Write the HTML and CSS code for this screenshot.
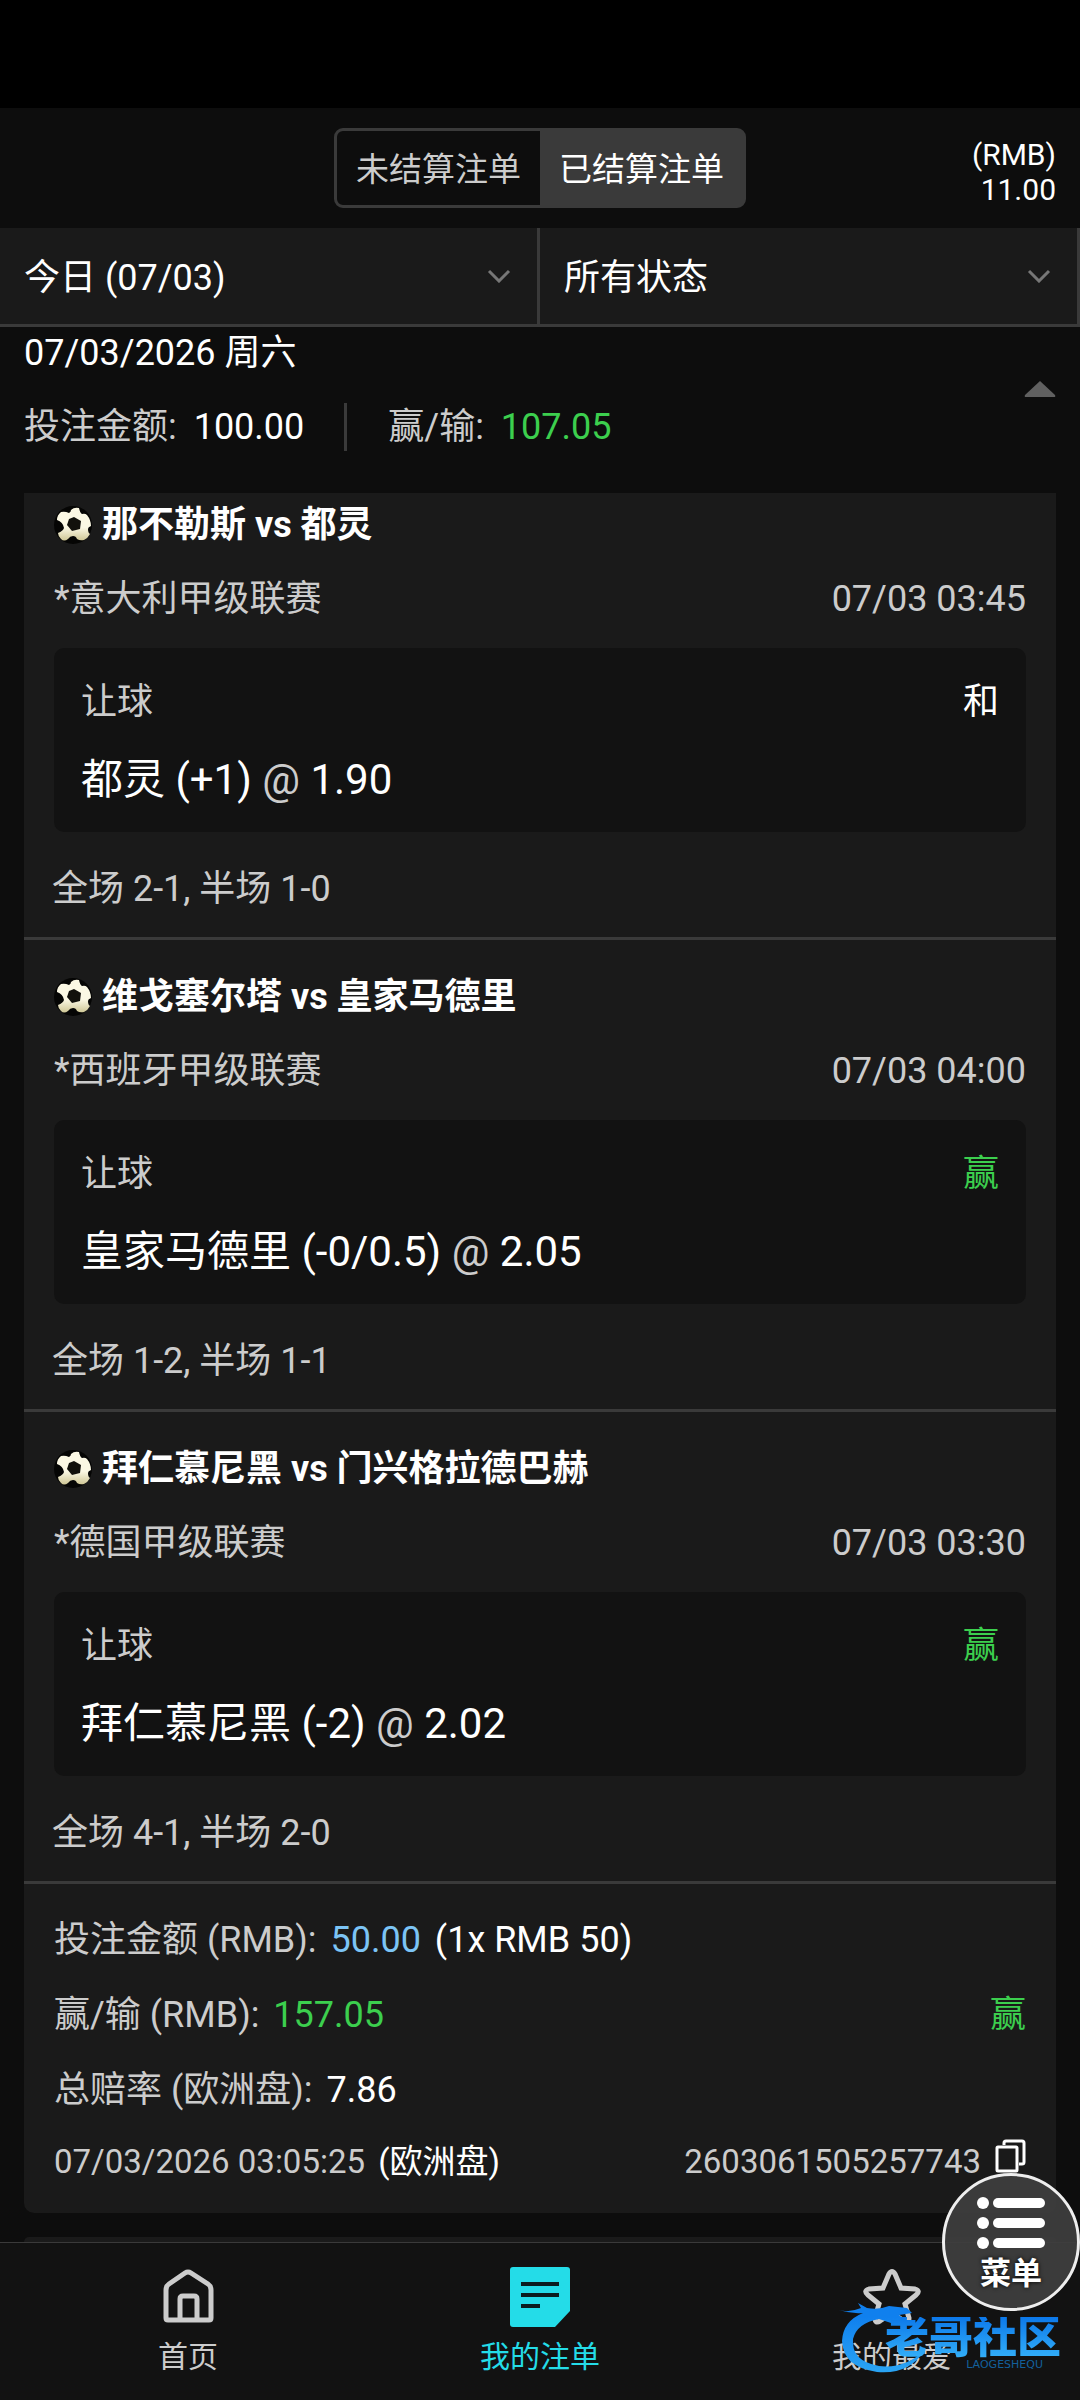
FILE: index.html
```html
<!DOCTYPE html>
<html lang="zh-CN">

<head>
    <meta charset="UTF-8">
    <meta name="viewport" content="width=device-width, initial-scale=1.0">
    <title>我的注单</title>
    <link rel="stylesheet" href="styles.css">
</head>

<body>
    <!-- Shared ball icon -->
    <svg class="defs" aria-hidden="true">
        <defs>
            <linearGradient id="ball-fill" x1="0" y1="0" x2="0" y2="1">
                <stop offset="0.6" stop-color="#fbf8e4" />
                <stop offset="1" stop-color="#cfc796" />
            </linearGradient>
            <symbol id="ball" viewBox="0 0 38 38">
                <circle cx="19" cy="19" r="19" fill="#050504" />
                <path d="M15 7 Q17 6 17 4 Q20 1 25 2 Q26 7 28 8 Q31 7 33 9 Q37 14 37 20 Q34 21 34 23 Q34 27 36 28 Q34 32 30 34 Q26 35 23 33 Q22 30 19 30 Q16 30 14 33 Q10 36 7 33 Q4 30 4 27 Q9 25 10 22 Q9 16 3 14 Q3 9 7 6 Q11 5 15 7 Z" fill="url(#ball-fill)" />
                <path d="M20 11 L27 15 L26 23 L18 25 L13 19 L15 13 Z" fill="#12110c" />
            </symbol>
        </defs>
    </svg>

    <div class="status-bar"></div>

    <header class="header">
        <div class="tabs">
            <button type="button" class="tab">未结算注单</button>
            <button type="button" class="tab active">已结算注单</button>
        </div>
        <div class="balance">
            <span>(RMB)</span>
            <span>11.00</span>
        </div>
    </header>

    <div class="filters">
        <div class="filter">
            <select aria-label="日期">
                <option>今日 (07/03)</option>
            </select>
            <svg class="chevron" viewBox="0 0 24 14"><path d="M2 2 L12 12 L22 2" /></svg>
        </div>
        <div class="filter">
            <select aria-label="状态">
                <option>所有状态</option>
            </select>
            <svg class="chevron" viewBox="0 0 24 14"><path d="M2 2 L12 12 L22 2" /></svg>
        </div>
    </div>

    <section class="day">
        <div>
            <div class="day-date">07/03/2026 周六</div>
            <div class="day-totals">
                <span class="total">投注金额: <b>100.00</b></span>
                <span class="total">赢/输: <b class="win">107.05</b></span>
            </div>
        </div>
        <button type="button" class="collapse" aria-label="收起">
            <svg viewBox="0 0 32 18"><path d="M16 1 L31 15 Q32 17 30 17 H2 Q0 17 1 15 Z" /></svg>
        </button>
    </section>

    <main class="bets">
        <article class="card cut">
            <div class="match">
                <h2 class="teams"><svg><use href="#ball" /></svg>那不勒斯 vs 都灵</h2>
                <div class="row league"><span>*意大利甲级联赛</span><time>07/03 03:45</time></div>
                <div class="pick">
                    <div class="row"><span>让球</span><span class="draw">和</span></div>
                    <div class="odds">都灵 (+1) <i>@</i> 1.90</div>
                </div>
                <div class="score">全场 2-1, 半场 1-0</div>
            </div>
            <div class="match">
                <h2 class="teams"><svg><use href="#ball" /></svg>维戈塞尔塔 vs 皇家马德里</h2>
                <div class="row league"><span>*西班牙甲级联赛</span><time>07/03 04:00</time></div>
                <div class="pick">
                    <div class="row"><span>让球</span><span class="win">赢</span></div>
                    <div class="odds">皇家马德里 (-0/0.5) <i>@</i> 2.05</div>
                </div>
                <div class="score">全场 1-2, 半场 1-1</div>
            </div>
            <div class="match">
                <h2 class="teams"><svg><use href="#ball" /></svg>拜仁慕尼黑 vs 门兴格拉德巴赫</h2>
                <div class="row league"><span>*德国甲级联赛</span><time>07/03 03:30</time></div>
                <div class="pick">
                    <div class="row"><span>让球</span><span class="win">赢</span></div>
                    <div class="odds">拜仁慕尼黑 (-2) <i>@</i> 2.02</div>
                </div>
                <div class="score">全场 4-1, 半场 2-0</div>
            </div>
            <div class="summary">
                <div class="row"><span>投注金额 (RMB): <b class="stake">50.00</b> <b>(1x RMB 50)</b></span></div>
                <div class="row"><span>赢/输 (RMB): <b class="win">157.05</b></span><span class="win">赢</span></div>
                <div class="row"><span>总赔率 (欧洲盘): <b>7.86</b></span></div>
                <div class="row small">
                    <span>07/03/2026 03:05:25 <b>(欧洲盘)</b></span>
                    <span class="ticket">2603061505257743
                        <button type="button" class="copy" aria-label="复制">
                            <svg viewBox="0 0 31 34"><path d="M9 6 V4 Q9 2 11 2 H27 Q29 2 29 4 V23 Q29 25 27 25 H24" /><rect x="2" y="8" width="20" height="24" rx="1" /></svg>
                        </button>
                    </span>
                </div>
            </div>
        </article>
        <article class="card next"></article>
    </main>

    <nav class="nav">
        <a href="#">
            <svg viewBox="0 0 60 60"><path d="M10 53 Q8 53 8 51 V23 Q8 19 11 17 L27 6 Q30 4 33 6 L50 17 Q53 19 53 23 V51 Q53 53 51 53 Z M22 53 V32 Q22 29 25 29 H36 Q39 29 39 32 V53" /></svg>
            <span>首页</span>
        </a>
        <a href="#" class="current">
            <svg viewBox="0 0 60 60"><path class="solid" d="M3 0 H57 Q60 0 60 3 V44 L45 60 H3 Q0 60 0 57 V3 Q0 0 3 0 Z" /><path class="lines" d="M11 17 H49 M11 28 H49 M11 39 H30" /></svg>
            <span>我的注单</span>
        </a>
        <a href="#">
            <svg viewBox="0 0 60 60"><path d="M27 7 Q30 2 33 7 L39 21 L53 22 Q59 24 54 28 L43 37 L47 51 Q47 57 42 54 L30 46 L18 54 Q13 57 13 51 L17 37 L6 28 Q1 24 7 22 L21 21 Z" /></svg>
            <span>我的最爱</span>
        </a>

        <button type="button" class="menu">
            <svg viewBox="0 0 70 54">
                <circle cx="7" cy="7" r="6" /><rect x="17" y="2" width="52" height="10" rx="5" />
                <circle cx="7" cy="27" r="6" /><rect x="17" y="22" width="52" height="10" rx="5" />
                <circle cx="7" cy="47" r="6" /><rect x="17" y="42" width="52" height="10" rx="5" />
            </svg>
            菜单
        </button>

        <div class="watermark">
            <svg viewBox="0 0 100 76">
                <defs>
                    <linearGradient id="swoosh" x1="0" y1="0" x2="0" y2="1">
                        <stop offset="0.2" stop-color="#1080ee" />
                        <stop offset="1" stop-color="#2aa4f4" />
                    </linearGradient>
                </defs>
                <path fill="url(#swoosh)" d="M0 9 Q10 12 22 7 L19 2 L28 7 Q40 9 50 5 L68 7 L73 12 L60 14 L66 19 L58 19 L52 22 L40 18 Q18 22 14 38 Q12 60 40 65 Q66 68 86 49 Q70 74 38 71 Q4 66 3 40 Q4 20 24 12 Q12 13 0 9 Z" />
            </svg>
            <div class="brand"><span>老哥社区</span><small>LAOGESHEQU</small></div>
        </div>
    </nav>
</body>

</html>
```
FILE: styles.css
```css
* {
    box-sizing: border-box;
}

body {
    margin: 0;
    min-height: 100vh;
    display: flex;
    flex-direction: column;
    background-color: #0d0d0d;
    color: #fff;
    font-family: Roboto, "Noto Sans CJK SC", sans-serif;
    font-size: 36px;
    line-height: 52px;
}

button,
select {
    font: inherit;
    color: inherit;
    background: none;
    border: none;
    padding: 0;
    margin: 0;
    cursor: pointer;
}

b,
i {
    font-weight: 400;
    font-style: normal;
}

b {
    color: #fff;
}

.defs {
    position: absolute;
    width: 0;
    height: 0;
}

.status-bar {
    height: 108px;
    background-color: #000;
}

/* Header */
.header {
    height: 120px;
    padding: 0 24px;
    display: grid;
    grid-template-columns: 1fr auto 1fr;
    align-items: center;
}

.tabs {
    grid-column: 2;
    display: flex;
    height: 80px;
    border: 3px solid #3a3a3a;
    border-radius: 9px;
}

.tab {
    padding: 4px 19px 0;
    font-size: 33px;
    color: #ccc;
}

.tab.active {
    background-color: #3a3a3a;
    color: #fff;
}

.balance {
    display: flex;
    flex-direction: column;
    align-items: flex-end;
    padding-top: 8px;
    font-size: 30px;
    line-height: 35px;
}

/* Filters */
.filters {
    display: grid;
    grid-template-columns: 1fr 1fr;
    border-bottom: 3px solid #3a3a3a;
    background-color: #1a1a1a;
}

.filter {
    display: grid;
    align-items: center;
    height: 96px;
    border-right: 3px solid #3a3a3a;
}

.filter select,
.filter svg {
    grid-area: 1 / 1;
}

.filter select {
    appearance: none;
    width: 100%;
    height: 100%;
    padding: 4px 60px 0 24px;
}

.chevron {
    width: 24px;
    height: 14px;
    margin-right: 26px;
    justify-self: end;
    pointer-events: none;
    fill: none;
    stroke: #777;
    stroke-width: 3;
}

/* Day totals */
.day {
    display: flex;
    justify-content: space-between;
    align-items: center;
    height: 166px;
    padding: 0 24px 43px;
}

.day-totals {
    display: flex;
    margin-top: 24px;
}

.total {
    color: #ccc;
    line-height: 48px;
}

.total b {
    margin-left: 8px;
}

.total + .total {
    margin-left: 40px;
    padding-left: 41px;
    border-left: 3px solid #3a3a3a;
}

.collapse svg {
    display: block;
    width: 32px;
    height: 18px;
    fill: #606060;
}

.win,
b.win {
    color: #3ccf4e;
}

.draw {
    color: #fff;
}

/* Bet cards */
.bets {
    flex: 1;
    padding: 0 24px;
    display: flex;
    flex-direction: column;
    gap: 24px;
}

.card {
    background-color: #1a1a1a;
    border-radius: 10px;
    color: #ccc;
}

.card.cut {
    border-radius: 0 0 10px 10px;
}

.card.next {
    flex: 1;
    border-radius: 10px 10px 0 0;
}

.row {
    display: flex;
    justify-content: space-between;
}

.match {
    padding: 32px 30px 22px;
    border-bottom: 3px solid #3a3a3a;
}

.cut .match:first-child {
    padding-top: 7px;
}

.teams {
    display: flex;
    align-items: center;
    gap: 10px;
    margin: 0;
    font-size: 36px;
    font-weight: 700;
    line-height: 50px;
    color: #fff;
}

.teams svg {
    width: 38px;
    height: 38px;
}

.league {
    margin: 23px 0;
}

.pick {
    padding: 28px 27px 26px;
    background-color: #121212;
    border-radius: 10px;
}

.odds {
    margin-top: 26px;
    font-size: 42px;
    color: #fff;
}

.odds i {
    color: #ccc;
}

.score {
    margin: 31px 0 0 -2px;
}

.summary {
    display: flex;
    flex-direction: column;
    gap: 23px;
    padding: 30px 30px 28px;
}

.summary b {
    margin-left: 5px;
}

.summary .stake {
    color: #7cc4f5;
}

.small {
    font-size: 33px;
    line-height: 46px;
}

.ticket {
    display: flex;
    align-items: flex-start;
    gap: 14px;
}

.copy svg {
    display: block;
    width: 31px;
    height: 34px;
    fill: none;
    stroke: #fff;
    stroke-width: 3;
}

/* Bottom navigation */
.nav {
    position: relative;
    display: grid;
    grid-template-columns: repeat(3, 1fr);
    height: 158px;
    padding: 24px 12px 0;
    border-top: 1px solid #3a3a3a;
    background-color: #121212;
}

.nav a {
    display: flex;
    flex-direction: column;
    align-items: center;
    gap: 9px;
    font-size: 30px;
    line-height: 42px;
    color: #ccc;
    text-decoration: none;
}

.nav a svg {
    width: 60px;
    height: 60px;
    fill: none;
    stroke: #ccc;
    stroke-width: 5;
}

.nav .current {
    color: #24dce8;
}

.nav .current .solid {
    fill: #24dce8;
    stroke: none;
}

.nav .current .lines {
    stroke: #0b1c1e;
    stroke-width: 4;
}

/* Floating menu button */
.menu {
    position: absolute;
    right: 0;
    top: -70px;
    width: 138px;
    height: 138px;
    display: flex;
    flex-direction: column;
    align-items: center;
    gap: 4px;
    padding-top: 20px;
    border: 3px solid #eee;
    border-radius: 50%;
    background-color: rgba(62, 62, 62, 0.93);
    font-size: 31px;
    font-weight: 700;
    line-height: 40px;
    color: #fff;
    text-shadow: 0 0 4px #000;
}

.menu svg {
    width: 70px;
    height: 54px;
    fill: #fff;
}

/* Community logo over the bar */
.watermark {
    position: absolute;
    right: 19px;
    top: 58px;
    display: flex;
    pointer-events: none;
}

.watermark svg {
    width: 100px;
    height: 76px;
    margin-right: -54px;
}

.brand {
    display: flex;
    flex-direction: column;
    align-items: flex-end;
    padding-top: 16px;
    font-size: 44px;
    font-weight: 900;
    line-height: 42px;
}

.brand span {
    background: linear-gradient(#0c78ea, #34b0f8);
    -webkit-background-clip: text;
    background-clip: text;
    color: transparent;
}

.brand small {
    margin-right: 18px;
    font-family: "DejaVu Sans", sans-serif;
    font-size: 11px;
    font-weight: 400;
    line-height: 12px;
    color: #12609c;
}
```
